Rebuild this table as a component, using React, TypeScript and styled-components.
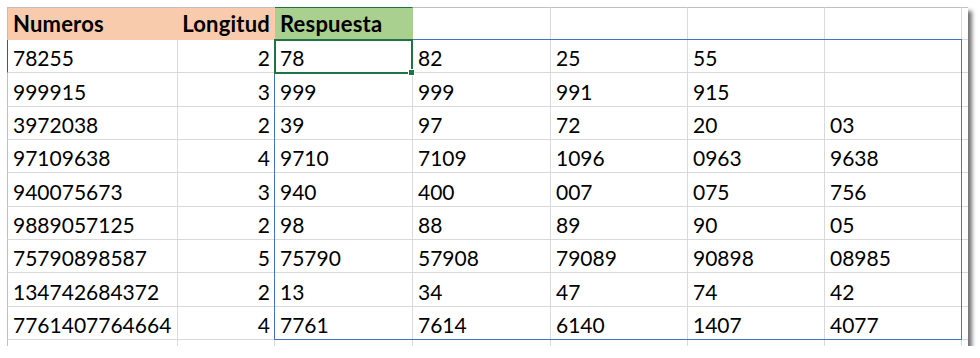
import React from 'react';
import styled, { createGlobalStyle } from 'styled-components';

const GlobalStyle = createGlobalStyle`
  html, body {
    margin: 0;
    padding: 0;
    background: #ffffff;
  }
`;

const gridLine = '#d9d9d9';
const frameLine = '#bfbfbf';
const excelGreen = '#217346';

const Frame = styled.div`
  position: relative;
  margin: 7px 0 0 7px;
  width: 961px;
  height: 339px;
  overflow: hidden;
  background: #fff;
  box-shadow: 4px 4px 4px rgba(0, 0, 0, 0.55);
`;

const Sheet = styled.div`
  display: grid;
  grid-template-columns: 171px 97px 138px 138px 137px 137px 137px 6px;
  grid-template-rows: 33px repeat(9, 33.333px) 10px;
  font-family: Lato, "Open Sans", "Liberation Sans", sans-serif;
  font-size: 21px;
  color: #000;
`;

const Cell = styled.div<{
  $fill?: string;
  $align?: 'left' | 'right';
  $bold?: boolean;
  $first?: boolean;
  $top?: boolean;
  $topColor?: string;
  $leftColor?: string;
}>`
  box-sizing: border-box;
  display: flex;
  align-items: flex-end;
  justify-content: ${({ $align }) => ($align === 'right' ? 'flex-end' : 'flex-start')};
  padding: 0 4px 4px 5px;
  line-height: 1;
  white-space: nowrap;
  overflow: visible;
  font-weight: ${({ $bold }) => ($bold ? 700 : 400)};
  font-size: ${({ $bold }) => ($bold ? '22px' : '21px')};
  letter-spacing: ${({ $bold }) => ($bold ? '0.2px' : '0')};
  background: ${({ $fill }) => $fill || '#fff'};
  border-right: 1px solid ${({ $fill }) => $fill || gridLine};
  border-bottom: 1px solid ${({ $fill }) => $fill || gridLine};
  ${({ $first, $leftColor }) => $first && `border-left: 1px solid ${$leftColor || frameLine};`}
  ${({ $top, $topColor }) => $top && `border-top: 1px solid ${$topColor || frameLine};`}
`;

const RangeBox = styled.div`
  position: absolute;
  left: 267px;
  top: 32px;
  width: 688px;
  height: 301px;
  border: 1px solid #4472c4;
  box-sizing: border-box;
  pointer-events: none;
`;

const ActiveCell = styled.div`
  position: absolute;
  left: 267px;
  top: 32px;
  width: 139px;
  height: 35px;
  border: 2px solid ${excelGreen};
  box-sizing: border-box;
  pointer-events: none;
`;

const FillHandle = styled.div`
  position: absolute;
  right: -4px;
  bottom: -4px;
  width: 5px;
  height: 5px;
  background: ${excelGreen};
  border: 1px solid #fff;
`;

const rows: [string, number, string[]][] = [
  ['78255', 2, ['78', '82', '25', '55', '']],
  ['999915', 3, ['999', '999', '991', '915', '']],
  ['3972038', 2, ['39', '97', '72', '20', '03']],
  ['97109638', 4, ['9710', '7109', '1096', '0963', '9638']],
  ['940075673', 3, ['940', '400', '007', '075', '756']],
  ['9889057125', 2, ['98', '88', '89', '90', '05']],
  ['75790898587', 5, ['75790', '57908', '79089', '90898', '08985']],
  ['134742684372', 2, ['13', '34', '47', '74', '42']],
  ['7761407764664', 4, ['7761', '7614', '6140', '1407', '4077']],
];

export default function App() {
  return (
    <>
      <GlobalStyle />
      <Frame>
        <Sheet>
          <Cell $top $first $bold $fill="#f8cbad">Numeros</Cell>
          <Cell $top $bold $fill="#f8cbad" $align="right">Longitud</Cell>
          <Cell $top $topColor={excelGreen} $bold $fill="#a9d08e">Respuesta</Cell>
          <Cell $top />
          <Cell $top />
          <Cell $top />
          <Cell $top />
          <Cell $top />

          {rows.map(([numero, longitud, parts], i) => (
            <React.Fragment key={numero}>
              <Cell $first $leftColor={i === 0 ? excelGreen : undefined}>{numero}</Cell>
              <Cell $align="right">{longitud}</Cell>
              {parts.map((part, j) => (
                <Cell key={j}>{part}</Cell>
              ))}
              <Cell />
            </React.Fragment>
          ))}

          {Array.from({ length: 8 }).map((_, j) => (
            <Cell key={`tail-${j}`} $first={j === 0} />
          ))}
        </Sheet>
        <RangeBox />
        <ActiveCell>
          <FillHandle />
        </ActiveCell>
      </Frame>
    </>
  );
}
